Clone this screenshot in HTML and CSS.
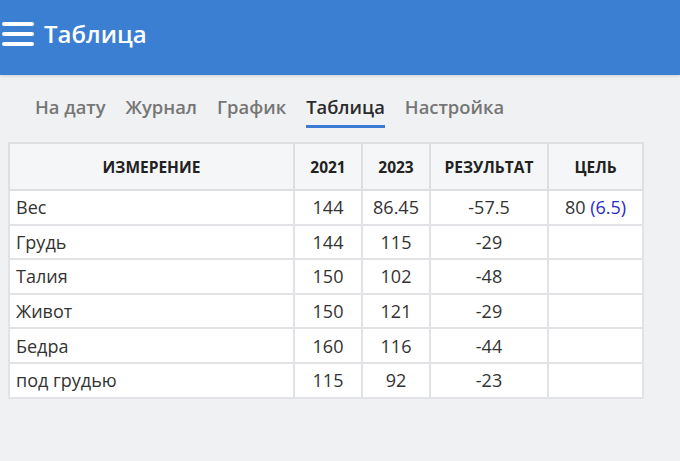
FILE: index.html
```html
<!DOCTYPE html>
<html lang="ru">
<head>
<meta charset="utf-8">
<link rel="stylesheet" href="styles.css">
</head>
<body>
<header class="appbar">
  <svg class="menu" width="32" height="26" viewBox="0 0 32 26">
    <rect x="0" y="1" width="32" height="4" rx="2" fill="#fff"/>
    <rect x="0" y="11" width="32" height="4" rx="2" fill="#fff"/>
    <rect x="0" y="21" width="32" height="4" rx="2" fill="#fff"/>
  </svg>
  <h1 class="title">Таблица</h1>
</header>
<nav class="tabs">
  <span class="tab">На дату</span>
  <span class="tab">Журнал</span>
  <span class="tab">График</span>
  <span class="tab active">Таблица</span>
  <span class="tab">Настройка</span>
</nav>
<table class="grid">
  <colgroup>
    <col class="c1"><col class="c2"><col class="c3"><col class="c4"><col class="c5">
  </colgroup>
  <thead>
    <tr><th>ИЗМЕРЕНИЕ</th><th>2021</th><th>2023</th><th>РЕЗУЛЬТАТ</th><th>ЦЕЛЬ</th></tr>
  </thead>
  <tbody>
    <tr><td class="name">Вес</td><td>144</td><td>86.45</td><td>-57.5</td><td>80 <span class="diff">(6.5)</span></td></tr>
    <tr><td class="name">Грудь</td><td>144</td><td>115</td><td>-29</td><td></td></tr>
    <tr><td class="name">Талия</td><td>150</td><td>102</td><td>-48</td><td></td></tr>
    <tr><td class="name">Живот</td><td>150</td><td>121</td><td>-29</td><td></td></tr>
    <tr><td class="name">Бедра</td><td>160</td><td>116</td><td>-44</td><td></td></tr>
    <tr><td class="name">под грудью</td><td>115</td><td>92</td><td>-23</td><td></td></tr>
  </tbody>
</table>
</body>
</html>
```
FILE: styles.css
```css
html, body {
  margin: 0;
  padding: 0;
}
body {
  background: #f0f1f3;
  font-family: "Open Sans", "Noto Sans", sans-serif;
  color: #333;
  width: 680px;
  height: 461px;
  overflow: hidden;
}
.appbar {
  height: 75px;
  background: #3a7fd2;
  display: flex;
  align-items: center;
  padding: 0 0 0 2px;
  box-sizing: border-box;
  box-shadow: 0 1px 3px rgba(0,0,0,0.15);
}
.menu {
  display: block;
  margin-top: -8px;
}
.title {
  margin: -8px 0 0 10px;
  color: #fff;
  font-size: 24px;
  font-weight: 600;
}
.tabs {
  display: flex;
  gap: 20px;
  padding: 19px 0 0 35px;
  height: 54px;
  box-sizing: border-box;
}
.tab {
  font-size: 18.4px;
  font-weight: 600;
  color: #767676;
  line-height: 26px;
  height: 34px;
  box-sizing: border-box;
}
.tab.active {
  color: #2b2b2b;
  border-bottom: 3px solid #3a7bd5;
}
.grid {
  margin: 13px 0 0 8px;
  border-collapse: collapse;
  table-layout: fixed;
  width: 634px;
  background: #fff;
  border: 2px solid #dddfe2;
}
.c1 { width: 285px; }
.c2 { width: 68px; }
.c3 { width: 68px; }
.c4 { width: 118px; }
.c5 { width: 95px; }
th {
  background: #f5f6f7;
  height: 45px;
  font-size: 15.5px;
  font-weight: 700;
  color: #222;
  border: 2px solid #dddfe2;
  padding: 0;
}
td {
  height: 34.6px;
  font-size: 18px;
  color: #333;
  text-align: center;
  border: 2px solid #e2e3e6;
  padding: 0;
  box-sizing: border-box;
}
td.name {
  text-align: left;
  padding-left: 6px;
}
.diff {
  color: #2a2ad0;
}
```
